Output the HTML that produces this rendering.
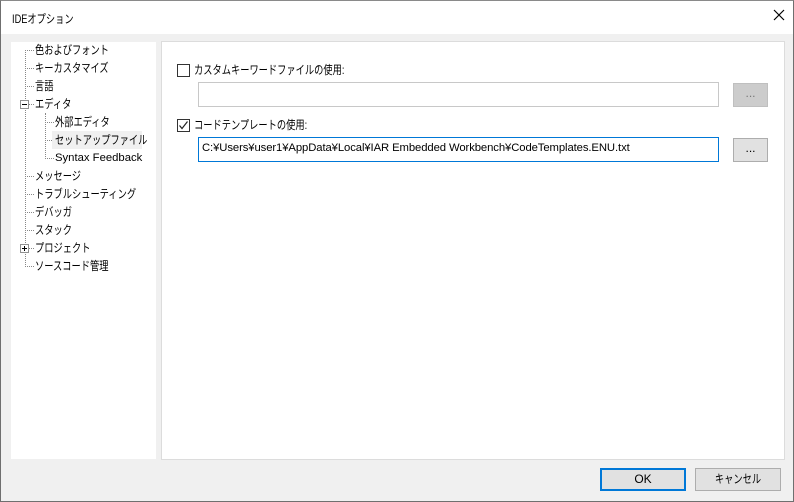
<!DOCTYPE html>
<html><head><meta charset="utf-8"><style>
*{margin:0;padding:0;box-sizing:border-box}
body{width:794px;height:502px;background:#fff;font-family:"Liberation Sans","Noto Sans CJK JP",sans-serif;font-size:12px;color:#000;position:relative;overflow:hidden}
.win{position:absolute;left:0;top:0;width:794px;height:502px;border:1px solid #6f6f6f;border-top:1px solid #8a8a8a;background:#f0f0f0}
.title{position:absolute;left:0;top:0;width:792px;height:33px;background:#fff}
.title>span{position:absolute;left:11px;top:9px;font-size:12px;white-space:nowrap}
.x{position:absolute;left:772px;top:8px}
.tree{position:absolute;left:10px;top:41px;width:145px;height:417px;background:#fff}
.right{position:absolute;left:160px;top:40px;width:624px;height:419px;background:#fff;border:1px solid #dcdcdc}
.it{position:absolute;height:16px;line-height:16px;white-space:nowrap;font-size:12px}
.j{display:inline-block;transform:scaleX(.77);transform-origin:0 50%}
.dv{position:absolute;border-left:1px dotted #888}
.dh{position:absolute;border-top:1px dotted #888;width:9px}
.pm{position:absolute;width:9px;height:9px;border:1px solid #919191;background:#fff}
.cb{position:absolute;width:13px;height:13px;border:1px solid #333;background:#fff}
.inp{position:absolute;height:25px;border:1px solid #c8c8c8;background:#fff}
.btn{position:absolute;border:1px solid #adadad;background:#e1e1e1;text-align:center}
</style></head><body>
<div class="win">
<div class="title"><span><span class="j">IDEオプション</span></span>
<svg class="x" width="12" height="12" viewBox="0 0 12 12"><path d="M1 1L11 11M11 1L1 11" stroke="#000" stroke-width="1.2"/></svg></div>
<div class="tree">
<div class="dv" style="left:14px;top:8px;height:217px"></div>
<div class="dv" style="left:34px;top:71px;height:46px"></div>
<div class="dh" style="left:14px;top:8px"></div>
<div class="dh" style="left:14px;top:26px"></div>
<div class="dh" style="left:14px;top:44px"></div>
<div class="dh" style="left:14px;top:62px"></div>
<div class="dh" style="left:34px;top:80px"></div>
<div class="dh" style="left:34px;top:98px"></div>
<div class="dh" style="left:34px;top:116px"></div>
<div class="dh" style="left:14px;top:134px"></div>
<div class="dh" style="left:14px;top:152px"></div>
<div class="dh" style="left:14px;top:170px"></div>
<div class="dh" style="left:14px;top:188px"></div>
<div class="dh" style="left:14px;top:206px"></div>
<div class="dh" style="left:14px;top:224px"></div>
<div class="pm" style="left:9px;top:58px"><div style="position:absolute;left:1px;top:3px;width:5px;border-top:1px solid #000"></div></div>
<div class="pm" style="left:9px;top:202px"><div style="position:absolute;left:1px;top:3px;width:5px;border-top:1px solid #000"></div><div style="position:absolute;left:3px;top:1px;height:5px;border-left:1px solid #000"></div></div>
<div class="it" style="left:24px;top:0"><span class="j">色およびフォント</span></div>
<div class="it" style="left:24px;top:18px"><span class="j">キーカスタマイズ</span></div>
<div class="it" style="left:24px;top:36px"><span class="j">言語</span></div>
<div class="it" style="left:24px;top:54px"><span class="j">エディタ</span></div>
<div class="it" style="left:44px;top:72px"><span class="j">外部エディタ</span></div>
<div style="position:absolute;left:41px;top:89px;width:90px;height:18px;background:#f0f0f0"></div>
<div class="it" style="left:44px;top:90px"><span class="j">セットアップファイル</span></div>
<div class="it" style="left:44px;top:108px;font-size:11.3px">Syntax Feedback</div>
<div class="it" style="left:24px;top:126px"><span class="j">メッセージ</span></div>
<div class="it" style="left:24px;top:144px"><span class="j">トラブルシューティング</span></div>
<div class="it" style="left:24px;top:162px"><span class="j">デバッガ</span></div>
<div class="it" style="left:24px;top:180px"><span class="j">スタック</span></div>
<div class="it" style="left:24px;top:198px"><span class="j">プロジェクト</span></div>
<div class="it" style="left:24px;top:216px"><span class="j">ソースコード管理</span></div>
</div>
<div class="right">
<div class="cb" style="left:15px;top:22px"></div>
<div class="it" style="left:32px;top:20px"><span class="j">カスタムキーワードファイルの使用:</span></div>
<div class="inp" style="left:36px;top:40px;width:521px"></div>
<div class="btn" style="left:571px;top:41px;width:35px;height:24px;background:#cccccc;border-color:#bfbfbf;color:#777;line-height:18px">...</div>
<div class="cb" style="left:15px;top:77px"><svg width="11" height="11" viewBox="0 0 11 11" style="position:absolute;left:0;top:0"><path d="M1.5 5.5L4 8.5L9.5 1.5" stroke="#222" stroke-width="1.2" fill="none"/></svg></div>
<div class="it" style="left:32px;top:75px"><span class="j">コードテンプレートの使用:</span></div>
<div class="inp" style="left:36px;top:95px;width:521px;border-color:#0078d7"><span style="position:absolute;left:3px;top:4px;white-space:nowrap;font-size:11.3px;letter-spacing:-0.1px">C:¥Users¥user1¥AppData¥Local¥IAR Embedded Workbench¥CodeTemplates.ENU.txt</span></div>
<div class="btn" style="left:571px;top:96px;width:35px;height:24px;line-height:18px">...</div>
</div>
<div class="btn" style="left:599px;top:467px;width:86px;height:23px;border:2px solid #0078d7;line-height:19px">OK</div>
<div class="btn" style="left:694px;top:467px;width:86px;height:23px;line-height:21px"><span class="j" style="transform-origin:50% 50%">キャンセル</span></div>
</div>
</body></html>
